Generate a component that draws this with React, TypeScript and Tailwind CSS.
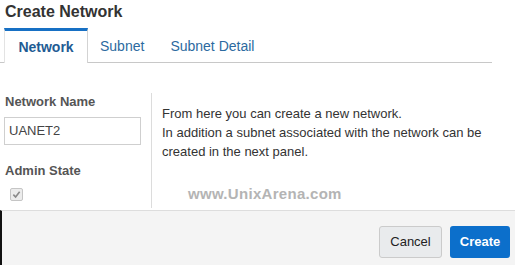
export default function App() {
	return (
		<div className="relative w-[515px] h-[265px] overflow-hidden bg-white font-['Liberation_Sans',Arial,sans-serif]">
			<div className="h-[28px] pl-[5px] pt-[2px] text-[16px] leading-[20px] font-bold text-[#333]">Create Network</div>

			<div className="flex h-[35px] mr-[23px] border-b border-[#c8c8c8]">
				<div className="ml-[4px] w-[84px] -mb-px flex items-center justify-center border-t-[3px] border-t-[#1770c4] border-l border-l-[#e3e3e3] border-r border-r-[#d3d3d3] bg-white text-[14px] font-bold text-[#1f5c94]">
					Network
				</div>
				<div className="pl-[12px] pt-[3px] flex items-center text-[14px] text-[#2c6aa0]">Subnet</div>
				<div className="pl-[26px] pt-[3px] flex items-center text-[14px] text-[#2c6aa0]">Subnet Detail</div>
			</div>

			<div className="flex h-[115px] mt-[30px]">
				<div className="w-[151px] pl-[5px] pt-[1px]">
					<div className="text-[13px] leading-[16px] font-bold text-[#555]">Network Name</div>
					<div className="mt-[7px] -ml-[1px] w-[137px] h-[28px] border border-[#cfcfcf] flex items-center pl-[4px] text-[13px] text-[#444]">
						UANET2
					</div>
					<div className="mt-[18px] text-[13px] leading-[16px] font-bold text-[#555]">Admin State</div>
					<div className="mt-[9px] ml-[5px] w-[13px] h-[13px] rounded-[2px] border border-[#c5c5c5] bg-[#ececec] flex items-center justify-center">
						<svg width="9" height="9" viewBox="0 0 10 10">
							<path d="M1.5 5.2 L4 7.8 L8.5 2" fill="none" stroke="#8a8a8a" strokeWidth="1.8" />
						</svg>
					</div>
				</div>
				<div className="flex-1 flex flex-col border-l border-[#dcdcdc] pl-[10px] pt-[11px]">
					<p className="text-[13px] leading-[19px] text-[#333]">
						From here you can create a new network.
						<br />
						In addition a subnet associated with the network can be
						<br />
						created in the next panel.
					</p>
					<div className="mt-auto mb-[5px] ml-[26px] text-[15px] leading-[18px] font-bold tracking-[0.3px] text-[#b4b4b4]">www.UnixArena.com</div>
				</div>
			</div>

			<div className="mt-[2px] h-[55px] flex justify-end items-start gap-[8px] pt-[15px] pr-[5px] border-t border-t-[#dddddd] border-l-2 border-l-[#111] bg-[#f4f4f4]">
				<button className="w-[63px] h-[32px] rounded-[3px] border border-[#cbcbcb] bg-[#e9ebed] text-[13px] text-[#222]">Cancel</button>
				<button className="w-[60px] h-[32px] rounded-[3px] bg-[#0c6fcb] text-[13px] font-bold text-white">Create</button>
			</div>
		</div>
	);
}
